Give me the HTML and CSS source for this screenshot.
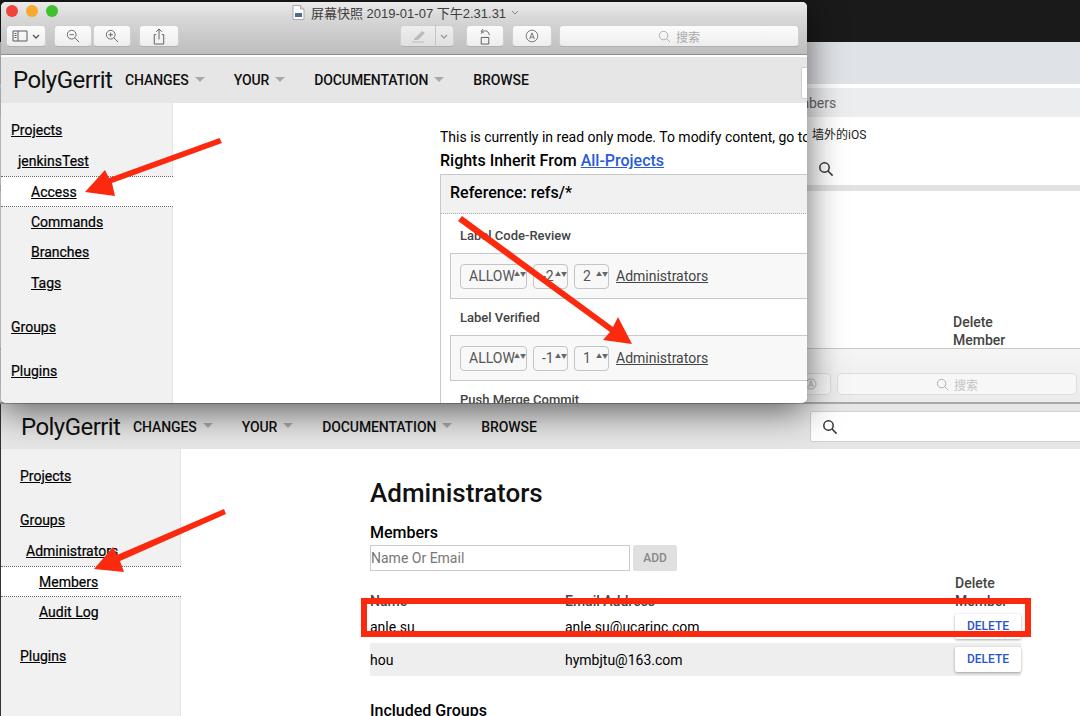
FILE: index.html
```html
<!DOCTYPE html>
<html lang="zh">
<head>
  <meta charset="UTF-8" />
  <title>屏幕快照 2019-01-07 下午2.31.31</title>
  <link rel="stylesheet" href="styles.css">
</head>
<body>
<div class="desktop">

  <!-- window behind everything, only its right edge shows -->
  <div class="window back-window">
    <div class="back-top"></div>
    <div class="back-band"></div>
    <div class="back-crumb">Members</div>
    <div class="back-project">墙外的iOS</div>
    <div class="back-search">
      <svg class="search-glyph" viewBox="0 0 16 16"><circle cx="6.5" cy="6.5" r="4.7"/><path d="M10 10l4.6 4.6"/></svg>
    </div>
    <div class="back-strip"></div>
    <div class="back-delete">Delete<br>Member</div>
    <div class="back-toolbar">
      <span class="mac-btn back-markup">
        <svg class="tool-icon" viewBox="0 0 18 18"><circle cx="9" cy="9" r="6.5"/><path d="M6 13l3-8 3 8M7 10.5h4"/></svg>
      </span>
      <span class="mac-btn back-find">
        <svg class="find-icon" viewBox="0 0 14 14"><circle cx="6" cy="6" r="4.6"/><path d="M9.4 9.4l3.6 3.6"/></svg>搜索
      </span>
    </div>
  </div>

  <!-- lower browser window: group members -->
  <div class="window lower-window">
    <header class="gerrit-bar">
      <span class="logo">PolyGerrit</span>
      <nav class="gerrit-nav">
        <span class="nav-item">CHANGES<i class="caret"></i></span>
        <span class="nav-item">YOUR<i class="caret"></i></span>
        <span class="nav-item">DOCUMENTATION<i class="caret"></i></span>
        <span class="nav-item">BROWSE</span>
      </nav>
      <div class="gerrit-search">
        <svg class="search-glyph" viewBox="0 0 16 16"><circle cx="6.5" cy="6.5" r="4.7"/><path d="M10 10l4.6 4.6"/></svg>
      </div>
    </header>
    <div class="gerrit-body">
      <aside class="side">
        <a class="side-top">Projects</a>
        <a class="side-top side-gap">Groups</a>
        <a class="side-sub">Administrators</a>
        <a class="side-leaf side-current">Members</a>
        <a class="side-leaf">Audit Log</a>
        <a class="side-top side-gap">Plugins</a>
      </aside>
      <main class="members">
        <h1>Administrators</h1>
        <h3>Members</h3>
        <div class="add-row">
          <span class="text-input">Name Or Email</span>
          <span class="add-btn">ADD</span>
        </div>
        <table class="member-table">
          <thead>
            <tr><th class="col-name">Name</th><th class="col-mail">Email Address</th><th class="col-del">Delete<br>Member</th></tr>
          </thead>
          <tbody>
            <tr><td>anle.su</td><td>anle.su@ucarinc.com</td><td><span class="del-btn">DELETE</span></td></tr>
            <tr class="row-alt"><td>hou</td><td>hymbjtu@163.com</td><td><span class="del-btn">DELETE</span></td></tr>
          </tbody>
        </table>
        <h3 class="groups-head">Included Groups</h3>
        <div class="add-row">
          <span class="text-input"></span>
          <span class="add-btn"></span>
        </div>
      </main>
    </div>
  </div>

  <!-- preview window on top -->
  <div class="window front-window">
    <div class="mac-head">
      <div class="lights"><i class="red"></i><i class="yellow"></i><i class="green"></i></div>
      <div class="mac-title">
        <svg class="file-icon" viewBox="0 0 12 15"><path d="M.5.5h7.5l3.5 3.5v10.500h-11z" fill="#fff" stroke="#aaa"/><path d="M8 .5v3.500h3.500" fill="#ddd" stroke="#aaa"/><rect x="2.500" y="8" width="7" height="4" fill="#4f6c8f"/></svg>
        屏幕快照 2019-01-07 下午2.31.31
        <svg class="title-chevron" viewBox="0 0 8 5"><path d="M1 1l3 3 3-3"/></svg>
      </div>
      <div class="mac-tools">
        <span class="mac-btn btn-view">
          <svg class="tool-icon" viewBox="0 0 16 14"><path d="M1 2h14v10H1zM6 2v10M2.500 4.500h2M2.500 6.500h2M2.500 8.500h2"/></svg>
          <svg class="btn-chevron" viewBox="0 0 8 5"><path d="M1 1l3 3 3-3"/></svg>
        </span>
        <span class="mac-btn btn-zoom">
          <svg class="tool-icon" viewBox="0 0 16 16"><circle cx="6.500" cy="6.500" r="5"/><path d="M10 10l5 5M4 6.500h5"/></svg>
        </span>
        <span class="mac-btn btn-zoom">
          <svg class="tool-icon" viewBox="0 0 16 16"><circle cx="6.500" cy="6.500" r="5"/><path d="M10 10l5 5M4 6.500h5M6.500 4v5"/></svg>
        </span>
        <span class="mac-btn btn-share">
          <svg class="tool-icon tall" viewBox="0 0 14 18"><path d="M4 7H2v10h10V7h-2M7 12V1M4 4l3-3 3 3"/></svg>
        </span>
        <span class="mac-btn btn-pen">
          <svg class="pen-icon" viewBox="0 0 16 14"><path d="M3 10l8-8 3 2-7 7H3z" fill="#bbb"/><path d="M1 13h12" stroke="#bbb"/></svg>
          <span class="pen-split"></span>
          <svg class="btn-chevron pale" viewBox="0 0 8 5"><path d="M1 1l3 3 3-3"/></svg>
        </span>
        <span class="mac-btn btn-rotate">
          <svg class="tool-icon tall" viewBox="0 0 14 18"><path d="M3 10h8v7H3zM3 6c1-3 4-3.500 6-2.500 1.500.8 2.500 2 2.500 4M5 1L3 3.500 5.500 5"/></svg>
        </span>
        <span class="mac-btn btn-markup">
          <svg class="tool-icon" viewBox="0 0 18 18"><circle cx="9" cy="9" r="7.500"/><path d="M6 13l3-8 3 8M7 10.500h4"/></svg>
        </span>
        <span class="mac-btn btn-find">
          <svg class="find-icon" viewBox="0 0 14 14"><circle cx="6" cy="6" r="4.600"/><path d="M9.400 9.400l3.600 3.600"/></svg>搜索
        </span>
      </div>
    </div>
    <div class="shot">
      <header class="gerrit-bar">
        <span class="logo">PolyGerrit</span>
        <nav class="gerrit-nav">
          <span class="nav-item">CHANGES<i class="caret"></i></span>
          <span class="nav-item">YOUR<i class="caret"></i></span>
          <span class="nav-item">DOCUMENTATION<i class="caret"></i></span>
          <span class="nav-item">BROWSE</span>
        </nav>
        <div class="gerrit-search"></div>
      </header>
      <div class="gerrit-body">
        <aside class="side">
          <a class="side-top">Projects</a>
          <a class="side-sub">jenkinsTest</a>
          <a class="side-leaf side-current">Access</a>
          <a class="side-leaf">Commands</a>
          <a class="side-leaf">Branches</a>
          <a class="side-leaf">Tags</a>
          <a class="side-top side-gap">Groups</a>
          <a class="side-top side-gap">Plugins</a>
        </aside>
        <main class="access">
          <p class="readonly">This is currently in read only mode. To modify content, go to the Programmer Guide</p>
          <h3 class="inherit">Rights Inherit From <a>All-Projects</a></h3>
          <section class="ref-box">
            <div class="ref-head">Reference: refs/*</div>
            <div class="perm">
              <div class="perm-name">Label Code-Review</div>
              <div class="rule">
                <span class="pick pick-wide">ALLOW</span>
                <span class="pick pick-mid">-2</span>
                <span class="pick">2</span>
                <a>Administrators</a>
              </div>
              <div class="perm-name">Label Verified</div>
              <div class="rule">
                <span class="pick pick-wide">ALLOW</span>
                <span class="pick pick-mid">-1</span>
                <span class="pick">1</span>
                <a>Administrators</a>
              </div>
              <div class="perm-name">Push Merge Commit</div>
            </div>
          </section>
        </main>
      </div>
    </div>
  </div>

  <!-- red annotations drawn on the screenshot -->
  <svg class="marks" viewBox="0 0 1080 716">
    <polygon points="219.500,138 222,143 112,183 115,196 85,192 105,170 109,178"/>
    <polygon points="462,216 458,221 610,332 603,340 632,344 618,317 613,327"/>
    <polygon points="224,509 226,514 120,561 124,572 94,569 113,547 117,555"/>
  </svg>
  <div class="red-box"></div>
</div>
</body>
</html>
```

FILE: styles.css
```css
* {
  box-sizing: border-box;
}
html, body {
  margin: 0;
  padding: 0;
  background: #000;
}
body {
  font-family: Roboto, "Noto Sans CJK SC", sans-serif;
  font-size: 14px;
  color: #000;
}
a {
  text-decoration: underline;
  color: inherit;
}
.desktop {
  position: relative;
  width: 1080px;
  height: 716px;
  overflow: hidden;
}
.window {
  position: absolute;
  overflow: hidden;
}

/* back window */
.back-window {
  left: 0;
  top: 0;
  width: 1080px;
  height: 404px;
  background: #fff;
}
.back-top {
  height: 42px;
  background: #1a1a1a;
}
.back-band {
  height: 42px;
  background: #dfe2e6;
  margin-bottom: 4px;
}
.back-crumb {
  height: 29px;
  background: #ecedef;
  color: #666;
  padding: 5px 0 0 777px;
  font-size: 14px;
  line-height: 20px;
}
.back-project {
  padding: 9px 0 0 812px;
  height: 36px;
  font-size: 12px;
  line-height: 18px;
  color: #222;
}
.back-search {
  height: 30px;
  margin-top: 2px;
  padding: 6px 0 0 818px;
  background: #fff;
}
.back-strip {
  height: 6px;
  margin-top: 0;
  background: #e2e2e2;
}
.back-delete {
  position: absolute;
  left: 953px;
  top: 313px;
  font-weight: 500;
  line-height: 18px;
  color: #444;
}
.back-toolbar {
  position: absolute;
  left: 0;
  top: 348px;
  width: 100%;
  height: 56px;
  background: linear-gradient(#f5f5f5, #ebebeb);
  border-top: 1px solid #c8c8c8;
  border-bottom: 2px solid #a9a9a9;
  display: flex;
  padding: 24px 0 0 791px;
  gap: 6px;
}
.back-markup {
  width: 40px;
}
.back-find {
  width: 240px;
  color: #c4c4c4;
  font-size: 12px;
}
.back-toolbar .mac-btn {
  background: #f7f7f7;
  border-color: #dcdcdc;
  box-shadow: none;
}
.back-toolbar .tool-icon {
  stroke: #aaa;
}

/* mac preview chrome */
.front-window {
  left: 1px;
  top: 2px;
  width: 806px;
  height: 401px;
  border-radius: 5px;
  background: #fff;
  box-shadow: 0 8px 36px rgba(0, 0, 0, 0.6);
}
.mac-head {
  position: relative;
  height: 53px;
  background: linear-gradient(#ebebeb, #d8d8d8 30%, #bdbdbd);
  border-bottom: 1px solid #8f8f8f;
}
.lights {
  position: absolute;
  left: 5px;
  top: 3px;
  display: flex;
  gap: 8px;
}
.lights i {
  display: block;
  width: 12px;
  height: 12px;
  border-radius: 50%;
}
.red { background: #f0453f; }
.yellow { background: #f8a92e; }
.green { background: #3fc02f; }
.mac-title {
  position: absolute;
  left: 291px;
  top: 1px;
  display: flex;
  align-items: center;
  height: 18px;
  font-family: "Liberation Sans", "Noto Sans CJK SC", sans-serif;
  font-size: 13px;
  color: #3d3d3d;
  white-space: nowrap;
}
.file-icon {
  width: 13px;
  height: 15px;
  margin-right: 6px;
}
.title-chevron {
  width: 8px;
  height: 5px;
  margin-left: 5px;
  fill: none;
  stroke: #888;
}
.mac-tools {
  position: absolute;
  left: 5px;
  top: 23px;
  display: flex;
}
.mac-btn {
  display: flex;
  align-items: center;
  justify-content: center;
  height: 22px;
  background: linear-gradient(#fcfcfc, #ededed);
  border: 1px solid #cfcfcf;
  border-bottom-color: #b0b0b0;
  border-radius: 4px;
}
.tool-icon {
  width: 16px;
  height: 14px;
  fill: none;
  stroke: #5a5a5a;
  stroke-width: 1;
}
.tool-icon.tall {
  height: 17px;
}
.btn-chevron {
  width: 8px;
  height: 5px;
  margin-left: 4px;
  fill: none;
  stroke: #555;
  stroke-width: 1.3;
}
.btn-chevron.pale {
  stroke: #999;
  margin-left: 4px;
}
.btn-view { width: 40px; margin-right: 8px; }
.btn-zoom { width: 38px; margin-right: 1px; }
.btn-share { width: 40px; margin: 0 221px 0 7px; }
.btn-pen { width: 54px; margin-right: 12px; background: linear-gradient(#eee, #e0e0e0); }
.pen-icon { width: 16px; height: 14px; margin-left: 4px; }
.pen-split { width: 1px; height: 22px; background: #c5c5c5; margin-left: 8px; }
.btn-rotate { width: 38px; margin-right: 8px; }
.btn-markup { width: 40px; margin-right: 7px; }
.btn-find {
  width: 240px;
  color: #aaa;
  font-family: "Noto Sans CJK SC", sans-serif;
  font-size: 12px;
}
.find-icon {
  width: 13px;
  height: 13px;
  margin-right: 5px;
  fill: none;
  stroke: #aaa;
}
.shot {
  border-top: 2px solid #fff;
}

/* shared gerrit page */
.gerrit-bar {
  display: flex;
  align-items: center;
  height: 46px;
  background: #e6e6e6;
  padding-left: 12px;
}
.logo {
  font-size: 24px;
  letter-spacing: -0.55px;
  color: #111;
  width: 112px;
}
.gerrit-nav {
  display: flex;
  font-weight: 500;
  color: #111;
}
.nav-item {
  display: flex;
  align-items: center;
  margin-right: 29px;
  letter-spacing: -0.1px;
}
.caret {
  width: 0;
  height: 0;
  margin-left: 6px;
  margin-top: -2px;
  border: 5px solid transparent;
  border-top: 5px solid #a9a9a9;
  border-bottom: 0;
}
.gerrit-search {
  position: absolute;
  background: #fff;
  border: 1px solid #d0d0d0;
  border-radius: 2px;
}
.gerrit-body {
  display: flex;
}
.side {
  flex: none;
  width: 172px;
  height: 300px;
  background: #f1f1f1;
  border-right: 1px solid #e4e4e4;
  display: flex;
  flex-direction: column;
  padding-top: 12px;
  font-weight: 500;
  font-weight: 400;
}
.side a {
  display: block;
  height: 30.500px;
  line-height: 30px;
  white-space: nowrap;
  -webkit-text-stroke: 0.2px #000;
}
.side-top { padding-left: 10px; }
.side-sub { padding-left: 17px; }
.side-leaf { padding-left: 30px; }
.side-gap { margin-top: 13.500px; }
.side .side-current {
  background: #fff;
  border-top: 1px dotted #666;
  border-bottom: 1px dotted #666;
  margin-right: -1px;
}

/* access page */
.access {
  padding: 25px 0 0 267px;
  white-space: nowrap;
  min-width: 0;
  flex: 1;
}
.readonly {
  margin: 0;
  height: 22px;
  line-height: 18px;
}
.inherit {
  margin: 0 0 2px;
  font-size: 16px;
  font-weight: 500;
  line-height: 22px;
}
.inherit a {
  color: #2a5bd7;
}
.ref-box {
  border: 1px solid #c8c8c8;
  border-right: 0;
  margin-right: 0;
  width: 400px;
}
.ref-head {
  height: 39px;
  background: #f1f1f1;
  border-bottom: 1px dotted #aaa;
  font-size: 16px;
  font-weight: 500;
  line-height: 36px;
  padding-left: 9px;
}
.perm {
  padding-left: 9px;
}
.perm-name {
  font-size: 13px;
  font-weight: 500;
  color: #444;
  height: 39px;
  padding: 12px 0 0 10px;
  line-height: 20px;
}
.rule {
  display: flex;
  align-items: center;
  height: 46px;
  margin-bottom: -3px;
  background: #f8f8f8;
  border: 1px solid #c8c8c8;
  border-right: 0;
  padding: 0 0 0 9px;
  gap: 6px;
  color: #444;
}
.rule + .perm-name {
  height: 39px;
}
.pick {
  position: relative;
  width: 35px;
  height: 25px;
  border: 1px solid #c4c4c4;
  border-radius: 4px;
  line-height: 23px;
  padding-left: 8px;
  color: #555;
}
.pick::after {
  content: "▲▼";
  position: absolute;
  right: 5px;
  top: 6px;
  width: 7px;
  font-size: 6px;
  line-height: 6px;
  color: #666;
  white-space: normal;
}
.pick-wide { width: 67px; }
.pick-mid { width: 35px; }
.rule a {
  margin-left: 1px;
  font-size: 14px;
}

/* members page */
.lower-window {
  left: 0;
  top: 404px;
  width: 1080px;
  height: 312px;
  background: #fff;
  border-left: 1px solid #333;
}
.lower-window .gerrit-bar {
  height: 45px;
  padding-left: 20px;
}
.lower-window .gerrit-search {
  left: 809px;
  top: 7px;
  width: 280px;
  height: 31px;
  padding: 7px 0 0 11px;
}
.front-window .gerrit-search {
  left: 800px;
  top: 65px;
  width: 20px;
  height: 32px;
}
.search-glyph {
  display: block;
  width: 16px;
  height: 16px;
  fill: none;
  stroke: #333;
  stroke-width: 1.500;
}
.lower-window .side {
  width: 180px;
  height: 270px;
  padding-top: 12px;
}
.lower-window .side-sub { padding-left: 25px; }
.lower-window .side-top { padding-left: 19px; }
.lower-window .side-leaf { padding-left: 38px; }
.members {
  padding: 28px 0 0 189px;
  flex: 1;
}
.members h1 {
  margin: 0;
  font-size: 26px;
  font-weight: 500;
  line-height: 32px;
  color: #111;
}
.members h3 {
  margin: 13px 0 0;
  font-size: 16px;
  font-weight: 500;
  line-height: 22px;
}
.add-row {
  display: flex;
  gap: 3px;
  height: 26px;
  margin-top: 1px;
}
.text-input {
  width: 260px;
  border: 1px solid #ccc;
  color: #777;
  line-height: 24px;
  white-space: nowrap;
}
.add-btn {
  width: 44px;
  background: #e0e0e0;
  border-radius: 2px;
  color: #888;
  font-size: 12px;
  font-weight: 500;
  line-height: 26px;
  text-align: center;
}
.member-table {
  border-collapse: collapse;
  width: 651px;
  margin-top: 0;
}
.member-table th {
  height: 39px;
  vertical-align: bottom;
  text-align: left;
  font-weight: 500;
  font-size: 14px;
  line-height: 18px;
  color: #444;
  padding: 0;
}
.member-table td {
  height: 33px;
  padding: 0;
}
.col-name { width: 195px; }
.col-mail { width: 390px; }
.row-alt {
  background: #eee;
}
.del-btn {
  display: block;
  width: 66px;
  height: 25px;
  background: #fff;
  border-radius: 2px;
  box-shadow: 0 1px 3px rgba(0, 0, 0, 0.35);
  color: #2a56c6;
  font-size: 12px;
  font-weight: 500;
  line-height: 25px;
  text-align: center;
}
.members .groups-head {
  margin-top: 24px;
}

/* annotations */
.marks {
  position: absolute;
  left: 0;
  top: 0;
  width: 1080px;
  height: 716px;
}
.marks polygon {
  fill: #fb2a0e;
}
.red-box {
  position: absolute;
  left: 361px;
  top: 598px;
  width: 670px;
  height: 39px;
  border: 6px solid #fb2a0e;
}
```
